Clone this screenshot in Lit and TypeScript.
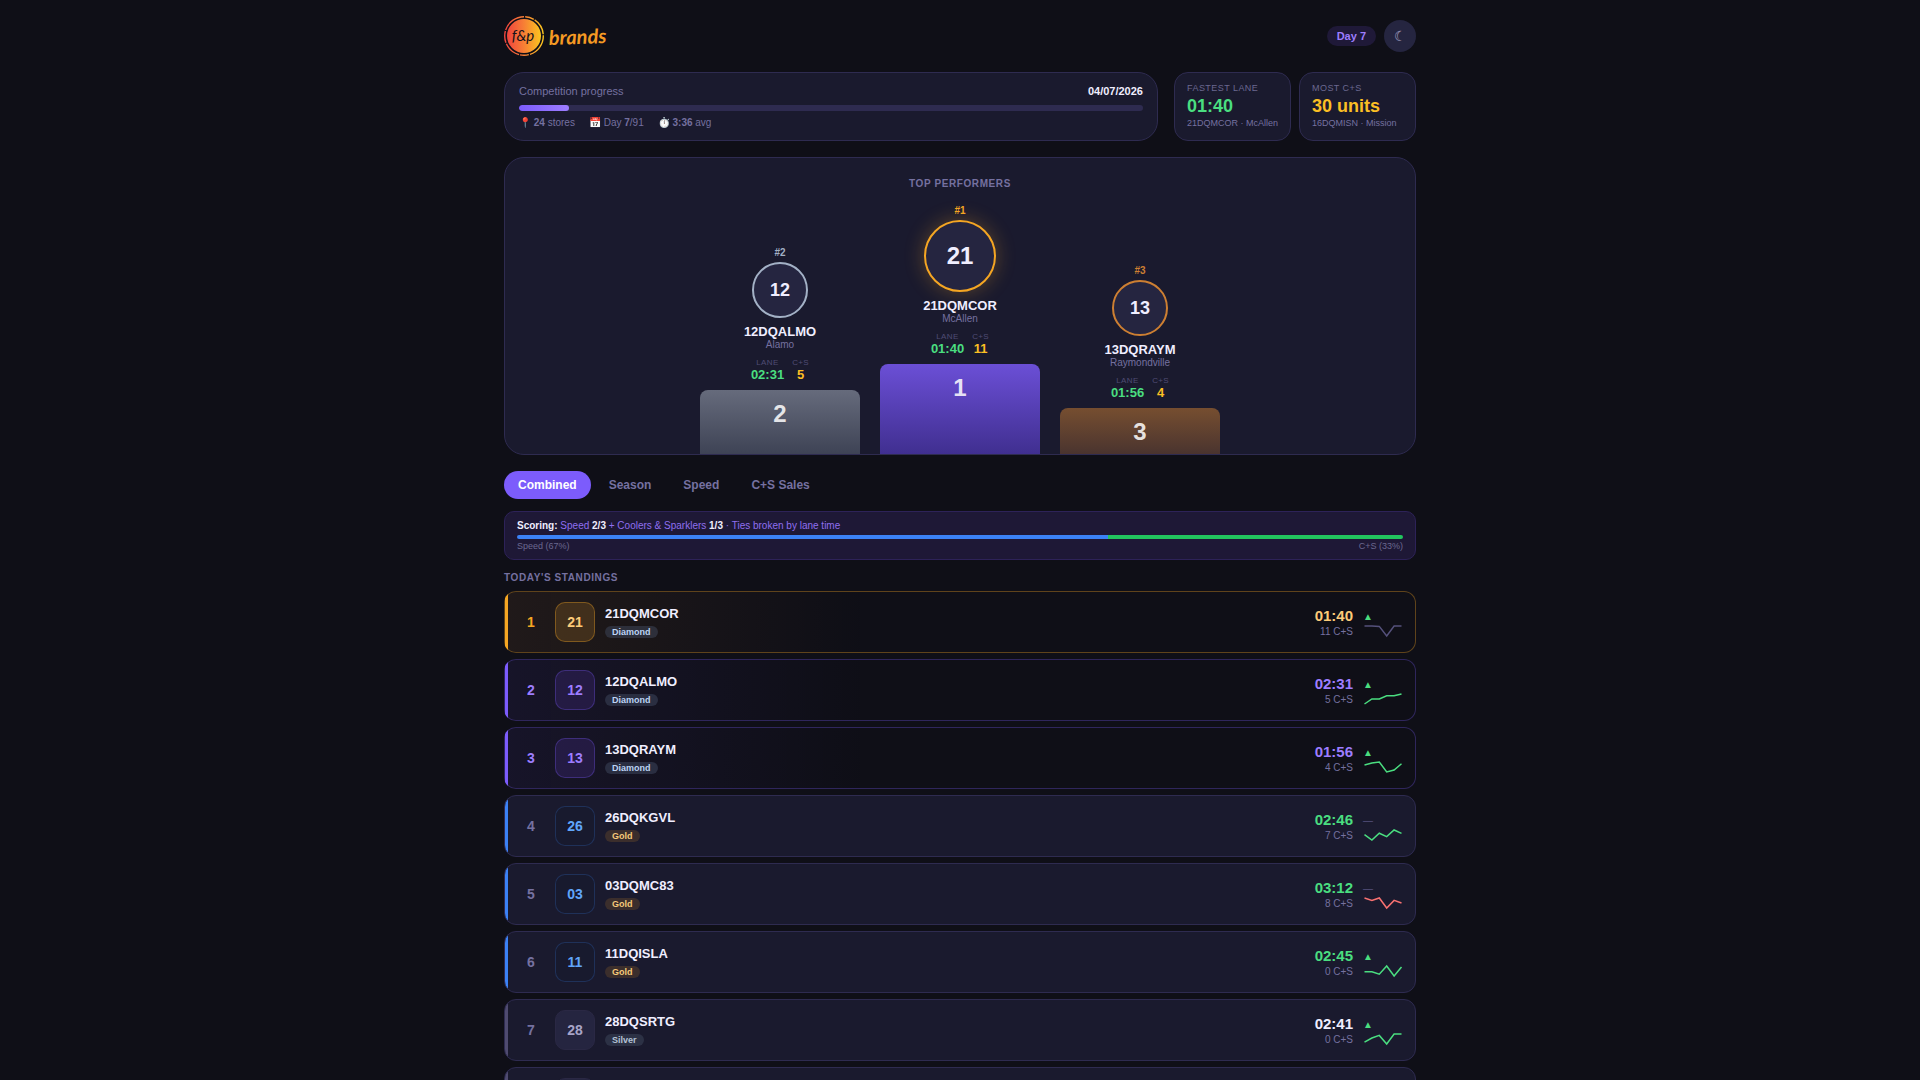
import { LitElement, html, css, svg, nothing } from "lit";
import { customElement, property, state } from "lit/decorators.js";
import { classMap } from "lit/directives/class-map.js";
import { styleMap } from "lit/directives/style-map.js";

interface Performer {
  place: number;
  num: string;
  code: string;
  city: string;
  lane: string;
  cs: number;
}

interface Standing {
  rank: number;
  num: string;
  code: string;
  tier: string;
  zone: "first" | "podium" | "upper" | "mid";
  time: string;
  cs: string;
  trend: "up" | "flat";
  line: "up" | "down" | "flat";
  points: number[];
}

const PERFORMERS: Performer[] = [
  { place: 2, num: "12", code: "12DQALMO", city: "Alamo", lane: "02:31", cs: 5 },
  { place: 1, num: "21", code: "21DQMCOR", city: "McAllen", lane: "01:40", cs: 11 },
  { place: 3, num: "13", code: "13DQRAYM", city: "Raymondville", lane: "01:56", cs: 4 },
];

const STANDINGS: Standing[] = [
  { rank: 1, num: "21", code: "21DQMCOR", tier: "Diamond", zone: "first", time: "01:40", cs: "11 C+S", trend: "up", line: "flat", points: [2, 2, 2.4, 12, 2, 2] },
  { rank: 2, num: "12", code: "12DQALMO", tier: "Diamond", zone: "podium", time: "02:31", cs: "5 C+S", trend: "up", line: "up", points: [12, 7, 7, 3.8, 3.8, 2] },
  { rank: 3, num: "13", code: "13DQRAYM", tier: "Diamond", zone: "podium", time: "01:56", cs: "4 C+S", trend: "up", line: "up", points: [5, 3, 2, 12, 10, 3.8] },
  { rank: 4, num: "26", code: "26DQKGVL", tier: "Gold", zone: "upper", time: "02:46", cs: "7 C+S", trend: "flat", line: "up", points: [6.6, 12, 5.2, 8.6, 2, 5.4] },
  { rank: 5, num: "03", code: "03DQMC83", tier: "Gold", zone: "upper", time: "03:12", cs: "8 C+S", trend: "flat", line: "down", points: [2, 4.4, 2, 12, 4.4, 7] },
  { rank: 6, num: "11", code: "11DQISLA", tier: "Gold", zone: "upper", time: "02:45", cs: "0 C+S", trend: "up", line: "up", points: [7.8, 7.8, 10.2, 2, 12, 3] },
  { rank: 7, num: "28", code: "28DQSRTG", tier: "Silver", zone: "mid", time: "02:41", cs: "0 C+S", trend: "up", line: "up", points: [10.2, 6, 3.4, 12, 2, 2] },
];

@customElement("store-podium")
class StorePodium extends LitElement {
  @property({ attribute: false }) items: Performer[] = [];

  static styles = css`
    :host { display: block; }
    .podium {
      display: grid;
      grid-template-columns: repeat(3, minmax(0, 160px));
      justify-content: center;
      align-items: end;
      gap: 20px;
    }
    .spot { display: flex; flex-direction: column; align-items: center; }
    .place { font-size: 10px; line-height: 12px; font-weight: 700; margin-bottom: 3px; }
    .disc {
      box-sizing: border-box;
      width: 56px;
      height: 56px;
      border-radius: 50%;
      border: 2px solid;
      background: #252540;
      display: grid;
      place-items: center;
      font-size: 18px;
      font-weight: 700;
      margin-bottom: 6px;
    }
    .disc span { color: #f0eeff; }
    .code { font-size: 13px; line-height: 15px; font-weight: 700; color: #f0eeff; }
    .city { font-size: 10px; line-height: 11px; color: #7571a0; margin-bottom: 8px; }
    .nums { display: flex; gap: 8px; margin-bottom: 8px; text-align: center; }
    .key { font-size: 8px; line-height: 9px; letter-spacing: 0.05em; color: #504c74; }
    .val { font-size: 13px; line-height: 15px; font-weight: 700; }
    .lane { color: #4ade80; }
    .cs { color: #fbbf24; }
    .base {
      box-sizing: border-box;
      width: 100%;
      padding-top: 10px;
      border-radius: 8px 8px 0 0;
      text-align: center;
      font-size: 24px;
      line-height: 28px;
      font-weight: 700;
      color: rgba(255, 255, 255, 0.85);
    }
    .p1 .place, .p1 .disc { color: #f5a623; }
    .p2 .place, .p2 .disc { color: #a3b1c6; }
    .p3 .place, .p3 .disc { color: #cd7f32; }
    .p1 .disc {
      width: 72px;
      height: 72px;
      font-size: 24px;
      box-shadow: 0 0 20px rgba(245, 166, 35, 0.3);
    }
    .p1 .base { height: 90px; background: linear-gradient(180deg, #6b4fd6, #402f90); }
    .p2 .base { height: 64px; background: linear-gradient(180deg, #666b7c, #3e4355); }
    .p3 .base { height: 46px; background: linear-gradient(180deg, #764e30, #4a342f); }
  `;

  render() {
    return html`<div class="podium">
      ${this.items.map(
        (p) => html`<div class="spot p${p.place}">
          <div class="place">#${p.place}</div>
          <div class="disc"><span>${p.num}</span></div>
          <div class="code">${p.code}</div>
          <div class="city">${p.city}</div>
          <div class="nums">
            <div><div class="key">LANE</div><div class="val lane">${p.lane}</div></div>
            <div><div class="key">C+S</div><div class="val cs">${p.cs}</div></div>
          </div>
          <div class="base">${p.place}</div>
        </div>`
      )}
    </div>`;
  }
}

@customElement("standing-row")
class StandingRow extends LitElement {
  @property({ attribute: false }) item?: Standing;

  static styles = css`
    :host { display: block; }
    .row {
      box-sizing: border-box;
      min-height: 62px;
      display: flex;
      align-items: center;
      gap: 10px;
      padding: 0 12px;
      border: 1px solid #2e2b50;
      border-radius: 12px;
      background: linear-gradient(90deg, var(--accent) 3px, transparent 3px) no-repeat, #1a1a2e;
    }
    .first {
      --accent: #f5a623;
      border-color: rgba(245, 166, 35, 0.35);
      background: linear-gradient(90deg, var(--accent) 3px, transparent 3px) no-repeat,
        linear-gradient(90deg, rgba(245, 158, 60, 0.08), transparent 40%) no-repeat;
    }
    .podium {
      --accent: #7c5cfc;
      border-color: rgba(124, 92, 252, 0.3);
      background: linear-gradient(90deg, var(--accent) 3px, transparent 3px) no-repeat,
        linear-gradient(90deg, rgba(124, 92, 252, 0.08), transparent 40%) no-repeat;
    }
    .upper { --accent: #3b82f6; }
    .mid { --accent: #4f4b70; }
    .rank { width: 28px; text-align: center; font-size: 14px; font-weight: 700; color: #7571a0; }
    .first .rank { color: #f5a623; }
    .podium .rank { color: #9d7dff; }
    .badge {
      box-sizing: border-box;
      width: 40px;
      height: 40px;
      border-radius: 10px;
      border: 1px solid #2a2844;
      background: #252540;
      color: #a8a4c8;
      display: grid;
      place-items: center;
      font-size: 14px;
      font-weight: 700;
    }
    .first .badge { background: rgba(245, 166, 50, 0.17); border-color: rgba(245, 166, 35, 0.35); color: #fccb78; }
    .podium .badge { background: rgba(124, 70, 252, 0.14); border-color: rgba(124, 92, 252, 0.3); color: #9d7dff; }
    .upper .badge { background: rgba(20, 28, 48, 0.3); border-color: rgba(59, 130, 246, 0.22); color: #60a5fa; }
    .who { flex: 1; display: flex; flex-direction: column; align-items: flex-start; gap: 4px; }
    .code { font-size: 13px; line-height: 16px; font-weight: 700; color: #f0eeff; }
    .tier { font-size: 9px; line-height: 12px; font-weight: 700; padding: 0 7px; border-radius: 6px; }
    .diamond { background: #2a2e41; color: #bcd3f5; }
    .first .diamond { background: #2d2f3a; }
    .gold { background: #3b2e2c; color: #f5c97a; }
    .silver { background: #2c3145; color: #b4c2d6; }
    .score { text-align: right; }
    .time { font-size: 15px; line-height: 18px; font-weight: 700; color: #f0eeff; }
    .first .time { color: #fccb78; }
    .podium .time { color: #9d7dff; }
    .upper .time { color: #4ade80; }
    .cs { font-size: 10px; line-height: 13px; color: #7571a0; }
    .trend { width: 40px; }
    .mark { font-size: 10px; line-height: 15px; padding-top: 5px; color: #55517c; }
    .mark.up { color: #4ade80; }
    .spark { display: block; width: 40px; height: 16px; fill: none; stroke-width: 1.5; }
    .line-up { stroke: #4ade80; }
    .line-down { stroke: #f87171; }
    .line-flat { stroke: #55517c; }
  `;

  render() {
    const s = this.item;
    if (!s) return html`<div class="row mid"><div class="rank"></div><div class="badge"></div></div>`;
    const pts = s.points.map((y, i) => `${(1.5 + i * 7.4).toFixed(1)},${y}`).join(" ");
    return html`<div class="row ${s.zone}">
      <div class="rank">${s.rank}</div>
      <div class="badge">${s.num}</div>
      <div class="who">
        <div class="code">${s.code}</div>
        <div class="tier ${s.tier.toLowerCase()}">${s.tier}</div>
      </div>
      <div class="score">
        <div class="time">${s.time}</div>
        <div class="cs">${s.cs}</div>
      </div>
      <div class="trend">
        <div class=${classMap({ mark: true, up: s.trend === "up" })}>${s.trend === "up" ? "▲" : "—"}</div>
        <svg class="spark line-${s.line}" viewBox="0 0 40 16" aria-hidden="true">
          ${svg`<polyline points=${pts}></polyline>`}
        </svg>
      </div>
    </div>`;
  }
}

@customElement("app-root")
class AppRoot extends LitElement {
  @state() private tab = "Combined";

  static styles = css`
    :host {
      display: block;
      box-sizing: border-box;
      height: 100vh;
      overflow: hidden;
      background: #0f0f17;
      color: #f0eeff;
      font-family: "Liberation Sans", Arial, sans-serif;
    }
    .page { max-width: 912px; margin: 0 auto; padding: 0 24px; }
    .top { display: flex; align-items: center; justify-content: space-between; padding: 16px 0; }
    .logo { display: block; width: 106px; height: 40px; }
    .logo svg { display: block; width: 100%; height: 100%; overflow: visible; }
    .tools { display: flex; align-items: center; gap: 8px; }
    .day {
      font-size: 11px;
      line-height: 12px;
      font-weight: 700;
      padding: 4px 10px;
      border-radius: 10px;
      background: #1f1938;
      color: #9d7dff;
    }
    .moon {
      width: 32px;
      height: 32px;
      padding: 0;
      border: 0;
      border-radius: 50%;
      background: #252540;
      color: #a8a4c8;
      font: inherit;
      font-size: 14px;
      cursor: pointer;
    }
    .summary { display: flex; gap: 16px; margin-bottom: 16px; }
    .panel { background: #1a1a2e; border: 1px solid #2e2b50; border-radius: 20px; }
    .progress { flex: 1; padding: 12px 14px; }
    .line { display: flex; justify-content: space-between; font-size: 11px; line-height: 12px; color: #7571a0; }
    .line strong { color: #f0eeff; }
    .track { height: 6px; border-radius: 3px; background: #2e2b50; margin: 8px 0 6px; overflow: hidden; }
    .fill { height: 100%; border-radius: 3px; background: linear-gradient(90deg, #7c5cfc, #9d7dff); }
    .facts { display: flex; gap: 14px; font-size: 10px; line-height: 11px; color: #7571a0; }
    .tiles { display: grid; grid-template-columns: auto minmax(117px, auto); gap: 8px; }
    .tile { border-radius: 14px; padding: 10px 12px; }
    .tile-key { font-size: 9px; line-height: 11px; letter-spacing: 0.05em; color: #6b6890; }
    .tile-val { font-size: 18px; line-height: 24px; font-weight: 700; }
    .tile-sub { font-size: 9px; line-height: 11px; color: #7571a0; white-space: nowrap; }
    .green { color: #4ade80; }
    .amber { color: #fbbf24; }
    .heading { margin: 0; font-size: 10px; font-weight: 700; letter-spacing: 0.06em; color: #7571a0; }
    .stage { padding-top: 21px; margin-bottom: 16px; }
    .stage .heading { text-align: center; line-height: 10px; margin-bottom: 16px; }
    .tabs { display: flex; gap: 4px; margin-bottom: 12px; }
    .tab {
      border: 0;
      border-radius: 14px;
      padding: 7px 14px;
      background: transparent;
      color: #7571a0;
      font: inherit;
      font-size: 12px;
      line-height: 14px;
      font-weight: 700;
      cursor: pointer;
    }
    .tab.on { background: #7c5cfc; color: #ffffff; }
    .scoring {
      padding: 8px 12px;
      border: 1px solid #2d2258;
      border-radius: 10px;
      background: #1e1836;
      margin-bottom: 12px;
    }
    .rule { font-size: 10px; line-height: 11px; color: #8f6ff0; }
    .rule strong { color: #f0eeff; }
    .split { display: flex; height: 4px; border-radius: 2px; overflow: hidden; margin: 4px 0 2px; }
    .split-speed { background: #3b82f6; }
    .split-cs { background: #22c55e; flex: 1; }
    .ends { display: flex; justify-content: space-between; font-size: 9px; line-height: 10px; color: #6b6890; }
    .list-title { line-height: 11px; margin-bottom: 8px; }
    .list { display: flex; flex-direction: column; gap: 6px; }
  `;

  private logo() {
    return html`<svg viewBox="0 0 106 40" role="img" aria-label="f&amp;p brands">
      <defs>
        <linearGradient id="sun" x1="0" y1="0" x2="1" y2="0">
          <stop offset="0" stop-color="#f0443e"></stop>
          <stop offset="0.5" stop-color="#f77f35"></stop>
          <stop offset="1" stop-color="#fbc51f"></stop>
        </linearGradient>
      </defs>
      <circle cx="20" cy="20" r="17" fill="url(#sun)"></circle>
      <circle cx="20" cy="20" r="19.3" fill="none" stroke="url(#sun)" stroke-width="1.4"
        stroke-dasharray="24 1.2 9 1 17 1.2 12 1"></circle>
      <text x="19" y="25" text-anchor="middle" font-family="Lato, sans-serif" font-style="italic"
        font-size="15" font-weight="400" fill="#15111a">f&amp;p</text>
      <text x="45" y="29" font-family="Lato, sans-serif" font-style="italic" font-size="20"
        font-weight="700" fill="#f59a23" transform="rotate(-2 45 29)">brands</text>
    </svg>`;
  }

  render() {
    return html`<div class="page">
      <header class="top">
        <a class="logo" href="#">${this.logo()}</a>
        <div class="tools">
          <span class="day">Day 7</span>
          <button class="moon" aria-label="Toggle theme">☾</button>
        </div>
      </header>

      <section class="summary">
        <div class="panel progress">
          <div class="line"><span>Competition progress</span><strong>04/07/2026</strong></div>
          <div class="track"><div class="fill" style=${styleMap({ width: "8%" })}></div></div>
          <div class="facts">
            <span>📍 <b>24</b> stores</span>
            <span>📅 Day <b>7</b>/91</span>
            <span>⏱️ <b>3:36</b> avg</span>
          </div>
        </div>
        <div class="tiles">
          <div class="panel tile">
            <div class="tile-key">FASTEST LANE</div>
            <div class="tile-val green">01:40</div>
            <div class="tile-sub">21DQMCOR · McAllen</div>
          </div>
          <div class="panel tile">
            <div class="tile-key">MOST C+S</div>
            <div class="tile-val amber">30 units</div>
            <div class="tile-sub">16DQMISN · Mission</div>
          </div>
        </div>
      </section>

      <section class="panel stage">
        <h2 class="heading">TOP PERFORMERS</h2>
        <store-podium .items=${PERFORMERS}></store-podium>
      </section>

      <nav class="tabs">
        ${["Combined", "Season", "Speed", "C+S Sales"].map(
          (t) => html`<button
            class=${classMap({ tab: true, on: t === this.tab })}
            aria-current=${t === this.tab ? "true" : nothing}
            @click=${() => (this.tab = t)}
          >${t}</button>`
        )}
      </nav>

      <section class="scoring">
        <div class="rule">
          <strong>Scoring:</strong> Speed <strong>2/3</strong> + Coolers &amp; Sparklers
          <strong>1/3</strong> · Ties broken by lane time
        </div>
        <div class="split">
          <div class="split-speed" style=${styleMap({ width: "66.7%" })}></div>
          <div class="split-cs"></div>
        </div>
        <div class="ends"><span>Speed (67%)</span><span>C+S (33%)</span></div>
      </section>

      <h2 class="heading list-title">TODAY'S STANDINGS</h2>
      <div class="list">
        ${STANDINGS.map((s) => html`<standing-row .item=${s}></standing-row>`)}
        <standing-row></standing-row>
      </div>
    </div>`;
  }
}
